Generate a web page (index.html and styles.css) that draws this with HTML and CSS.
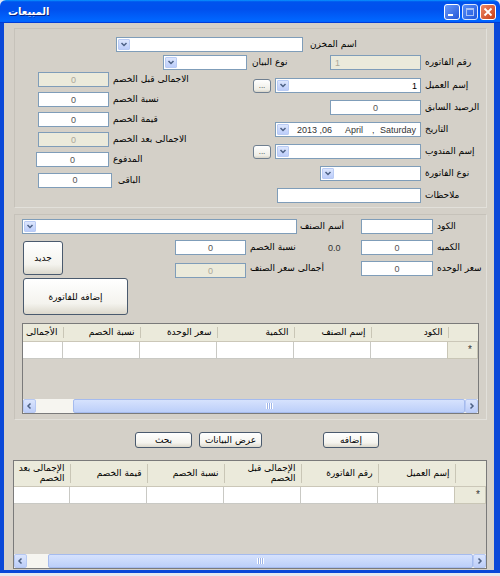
FILE: index.html
```html
<!DOCTYPE html>
<html>
<head>
<meta charset="utf-8">
<link rel="stylesheet" href="styles.css">
</head>
<body>
<div class="window">
  <div class="titlebar">
    <span class="title">المبيعات</span>
    <div class="tb-btns">
      <svg width="16" height="16" viewBox="0 0 16 16"><defs><linearGradient id="gb" x1="0" y1="0" x2="1" y2="1"><stop offset="0" stop-color="#6b9cfb"/><stop offset="1" stop-color="#2153d6"/></linearGradient></defs><rect x="0.5" y="0.5" width="15" height="15" rx="2.5" fill="url(#gb)" stroke="#fff"/><rect x="4" y="10" width="5" height="2" fill="#fff"/></svg>
      <svg width="16" height="16" viewBox="0 0 16 16"><rect x="0.5" y="0.5" width="15" height="15" rx="2.5" fill="url(#gb)" stroke="#fff" opacity="0.85"/><rect x="4.5" y="4.5" width="7" height="7" fill="none" stroke="#a9c1f5"/><rect x="4" y="4" width="8" height="2" fill="#a9c1f5"/></svg>
      <svg width="16" height="16" viewBox="0 0 16 16"><defs><linearGradient id="gr" x1="0" y1="0" x2="1" y2="1"><stop offset="0" stop-color="#ef8a68"/><stop offset="1" stop-color="#c53a12"/></linearGradient></defs><rect x="0.5" y="0.5" width="15" height="15" rx="2.5" fill="url(#gr)" stroke="#fff"/><path d="M4.5 4.5 L11.5 11.5 M11.5 4.5 L4.5 11.5" stroke="#fff" stroke-width="1.8"/></svg>
    </div>
  </div>
  <div class="frame">
    <div class="client">
      <!-- top panel -->
      <div class="panel top">
        <div class="row rowA">
          <div class="combo w187"><span class="dd"><svg width="12" height="11" viewBox="0 0 12 11"><path d="M3.5 4 L6 6.5 L8.5 4" fill="none" stroke="#4d6185" stroke-width="1.5"/></svg></span></div>
          <span class="lbl ml7">اسم المخزن</span>
        </div>
        <div class="row rowB">
          <div class="combo w84 ml148"><span class="dd"><svg width="12" height="11" viewBox="0 0 12 11"><path d="M3.5 4 L6 6.5 L8.5 4" fill="none" stroke="#4d6185" stroke-width="1.5"/></svg></span></div>
          <span class="lbl lblbox83">نوع البيان</span>
          <div class="tb dis w91 left">1</div>
          <span class="lbl ml4">رقم الفاتوره</span>
        </div>
        <div class="cols">
          <div class="lcol">
            <div class="row"><div class="tb dis w71">0</div><span class="lbl ml4">الاجمالى قبل الخصم</span></div>
            <div class="row"><div class="tb w71">0</div><span class="lbl ml4">نسبة الخصم</span></div>
            <div class="row"><div class="tb w71">0</div><span class="lbl ml4">قيمة الخصم</span></div>
            <div class="row"><div class="tb dis w71">0</div><span class="lbl ml4">الاجمالى بعد الخصم</span></div>
            <div class="row"><div class="tb w73 mlm2">0</div><span class="lbl ml4">المدفوع</span></div>
            <div class="row h16"><div class="tb w74 h16">0</div><span class="lbl ml6">الباقى</span></div>
          </div>
          <div class="rcol">
            <div class="row">
              <div class="rctl"><span class="dots">...</span><div class="combo w146"><span class="dd"><svg width="12" height="11" viewBox="0 0 12 11"><path d="M3.5 4 L6 6.5 L8.5 4" fill="none" stroke="#4d6185" stroke-width="1.5"/></svg></span><span class="cval">1</span></div></div>
              <span class="lbl ml4">إسم العميل</span>
            </div>
            <div class="row">
              <div class="rctl"><div class="tb w91">0</div></div>
              <span class="lbl ml4">الرصيد السابق</span>
            </div>
            <div class="row">
              <div class="rctl"><div class="combo w146 date"><span class="dd"><svg width="12" height="11" viewBox="0 0 12 11"><path d="M3.5 4 L6 6.5 L8.5 4" fill="none" stroke="#4d6185" stroke-width="1.5"/></svg></span><span class="d1">2013 ,06</span><span class="d2">April</span><span class="d3">,</span><span class="d4">Saturday</span></div></div>
              <span class="lbl ml4">التاريخ</span>
            </div>
            <div class="row">
              <div class="rctl"><span class="dots">...</span><div class="combo w146"><span class="dd"><svg width="12" height="11" viewBox="0 0 12 11"><path d="M3.5 4 L6 6.5 L8.5 4" fill="none" stroke="#4d6185" stroke-width="1.5"/></svg></span></div></div>
              <span class="lbl ml4">إسم المندوب</span>
            </div>
            <div class="row">
              <div class="rctl"><div class="combo w101"><span class="dd"><svg width="12" height="11" viewBox="0 0 12 11"><path d="M3.5 4 L6 6.5 L8.5 4" fill="none" stroke="#4d6185" stroke-width="1.5"/></svg></span></div></div>
              <span class="lbl ml4">نوع الفاتورة</span>
            </div>
            <div class="row">
              <div class="rctl"><div class="tb w144"></div></div>
              <span class="lbl ml4">ملاحظات</span>
            </div>
          </div>
        </div>
      </div>

      <!-- middle panel -->
      <div class="panel mid">
        <div class="row mrow1">
          <div class="combo w275"><span class="dd"><svg width="12" height="11" viewBox="0 0 12 11"><path d="M3.5 4 L6 6.5 L8.5 4" fill="none" stroke="#4d6185" stroke-width="1.5"/></svg></span></div>
          <span class="lbl box64">أسم الصنف</span>
          <div class="tb w72"></div>
          <span class="lbl ml4">الكود</span>
        </div>
        <div class="mbody">
          <div class="bcol">
            <div class="btn bnew">جديد</div>
            <div class="btn badd">إضافه للفاتورة</div>
          </div>
          <div class="fields">
            <div class="row">
              <div class="tb w71">0</div>
              <span class="lbl box79">نسبة الخصم</span>
              <span class="num box36">0.0</span>
              <div class="tb w72">0</div>
              <span class="lbl ml4">الكميه</span>
            </div>
            <div class="row r3">
              <div class="tb dis w71 down2">0</div>
              <span class="lbl box115">أجمالى سعر الصنف</span>
              <div class="tb w72">0</div>
              <span class="lbl ml4">سعر الوحده</span>
            </div>
          </div>
        </div>
        <div class="grid g1">
          <div class="gview">
            <table class="gt">
              <colgroup><col class="rh30"><col class="c77"><col class="c77"><col class="c77"><col class="c77"><col class="c77"><col class="c77"></colgroup>
              <tr class="hdr"><th class="rhc"></th><th>الكود</th><th>إسم الصنف</th><th>الكمية</th><th>سعر الوحدة</th><th>نسبة الخصم</th><th>الأجمالى</th></tr>
              <tr class="drow"><td class="rhc star">*</td><td></td><td></td><td></td><td></td><td></td><td></td></tr>
            </table>
          </div>
          <div class="hscroll">
            <span class="sba"><svg width="11" height="12" viewBox="0 0 11 12"><path d="M6.5 3.5 L4 6 L6.5 8.5" fill="none" stroke="#4d6185" stroke-width="1.5"/></svg></span>
            <span class="sbt w37"></span>
            <span class="sbth"><span class="grip"></span></span>
            <span class="sba"><svg width="11" height="12" viewBox="0 0 11 12"><path d="M4.5 3.5 L7 6 L4.5 8.5" fill="none" stroke="#4d6185" stroke-width="1.5"/></svg></span>
          </div>
        </div>
      </div>

      <!-- bottom -->
      <div class="brow">
        <div class="btn bsm w57">بحث</div>
        <div class="btn bsm w63 ml7">عرض البيانات</div>
        <div class="btn bsm w56 ml61">إضافه</div>
      </div>
      <div class="grid g2">
        <div class="gview">
          <table class="gt">
            <colgroup><col class="rh31"><col class="c77"><col class="c77"><col class="c77"><col class="c77"><col class="c77"><col class="c77"></colgroup>
            <tr class="hdr h2"><th class="rhc"></th><th>إسم العميل</th><th>رقم الفاتورة</th><th>الإجمالى قبل<br>الخصم</th><th>نسبة الخصم</th><th>قيمة الخصم</th><th>الإجمالى بعد<br>الخصم</th></tr>
            <tr class="drow"><td class="rhc star">*</td><td></td><td></td><td></td><td></td><td></td><td></td></tr>
          </table>
        </div>
        <div class="hscroll">
          <span class="sba"><svg width="11" height="12" viewBox="0 0 11 12"><path d="M6.5 3.5 L4 6 L6.5 8.5" fill="none" stroke="#4d6185" stroke-width="1.5"/></svg></span>
          <span class="sbt w21"></span>
          <span class="sbth"><span class="grip"></span></span>
          <span class="sba"><svg width="11" height="12" viewBox="0 0 11 12"><path d="M4.5 3.5 L7 6 L4.5 8.5" fill="none" stroke="#4d6185" stroke-width="1.5"/></svg></span>
        </div>
      </div>
    </div>
  </div>
  <div class="desk"></div>
</div>
</body>
</html>
```
FILE: styles.css
```css
* { box-sizing: border-box; }
html, body { margin: 0; padding: 0; }
body {
  width: 500px; height: 576px; overflow: hidden;
  background: #dfe6f3;
  font-family: "Liberation Sans", "DejaVu Sans", sans-serif;
  font-size: 9px; color: #000;
}
.window { width: 500px; height: 576px; display: flex; flex-direction: column; }
.titlebar {
  height: 23px; flex: none;
  display: flex; align-items: center; justify-content: space-between;
  padding: 0 4px 0 8px;
  border-radius: 6px 6px 0 0;
  background: linear-gradient(180deg, #0997ff, #0053ee 8%, #0050ee 40%, #06f 88%, #06f 93%, #005bff 95%, #003dd7 96%, #003dd7);
}
.title {
  color: #fff; font-weight: bold; font-size: 10px;
  font-family: "DejaVu Sans", sans-serif;
  text-shadow: 1px 1px #0a1f7d;
}
.tb-btns { display: flex; gap: 2px; margin-top: 1px; }
.tb-btns svg { display: block; }
.frame {
  height: 550px; flex: none;
  background: #0a48d8;
  padding: 0 6px 3px 4px;
}
.desk { flex: 1; background: #e4e9f1; }
.client {
  width: 490px; height: 547px;
  background: #d4d0c8;
  display: flex; flex-direction: column; align-items: flex-start;
}

.panel {
  margin-left: 10px; width: 473px;
  border: 1px solid; border-color: #c6c2ba #e2e0da #e2e0da #c6c2ba;
  display: flex; flex-direction: column; align-items: flex-start;
}
.panel.top { margin-top: 5px; height: 180px; }
.panel.mid { margin-top: 6px; height: 206px; }

.row { display: flex; align-items: center; height: 15px; }
.h16 { height: 16px; }
.rowA { margin: 8px 0 0 101px; }
.rowB { margin-top: 3px; }

.lbl { font-family: "DejaVu Sans", sans-serif; font-size: 9px; white-space: nowrap; line-height: 15px; }
.num { font-size: 9px; color: #333; }

.tb {
  height: 15px; border: 1px solid #7f9db9; background: #fff;
  display: flex; align-items: center; justify-content: center;
  color: #555; font-size: 9px;
}
.tb.dis { background: #ebeadb; color: #aca899; }
.tb.left { justify-content: flex-start; padding-left: 4px; }
.combo {
  height: 15px; border: 1px solid #7f9db9; background: #fff;
  display: flex; align-items: center; padding: 0 1px;
}
.dd {
  width: 12px; height: 11px; flex: none;
  border: 1px solid #b9cbf4; border-radius: 1px;
  background: linear-gradient(180deg, #dce6fd, #bccdfa);
  display: flex; align-items: center; justify-content: center;
}
.dd svg { display: block; margin: -1px; }
.cval { margin-left: auto; margin-right: 2px; color: #000; }
.date span { color: #333; white-space: nowrap; }
.date .d1 { margin-left: 8px; width: 48px; }
.date .d2 { width: 27px; }
.date .d3 { width: 8px; }

.dots {
  width: 18px; height: 14px; flex: none;
  border: 1px solid #6f7f90; border-radius: 3px;
  background: linear-gradient(180deg, #fff, #eeede6 80%, #d8d4c8);
  display: flex; align-items: center; justify-content: center;
  font-size: 8px; color: #333; line-height: 8px;
}

.w187 { width: 187px; } .w84 { width: 84px; } .w91 { width: 91px; }
.w71 { width: 71px; } .w72 { width: 72px; } .w73 { width: 73px; } .w74 { width: 74px; }
.w146 { width: 146px; } .w101 { width: 101px; } .w144 { width: 144px; } .w275 { width: 275px; }
.ml4 { margin-left: 4px; } .ml6 { margin-left: 6px; } .ml7 { margin-left: 7px; }
.ml148 { margin-left: 148px; } .mlm2 { margin-left: -2px; } .ml61 { margin-left: 61px; }
.lblbox83 { width: 83px; padding-left: 5px; }
.box64 { width: 64px; padding-left: 3px; }
.box79 { width: 79px; padding-left: 4px; }
.box36 { width: 36px; padding-left: 3px; }
.box115 { width: 115px; padding-left: 4px; }

.cols { display: flex; align-items: flex-start; margin-left: 23px; }
.lcol { width: 215px; padding-top: 2px; display: flex; flex-direction: column; gap: 5px; }
.rcol { padding-top: 8px; display: flex; flex-direction: column; gap: 7px; }
.rctl { width: 168px; display: flex; justify-content: flex-end; align-items: center; gap: 4px; }

.mrow1 { margin: 4px 0 0 7px; }
.mbody { display: flex; margin: 6px 0 0 8px; align-items: flex-start; }
.bcol { width: 105px; display: flex; flex-direction: column; align-items: flex-start; }
.btn {
  border: 1px solid #4a5a6e; border-radius: 3px;
  background: linear-gradient(180deg, #fff, #f4f3ee 70%, #dcd8cc);
  display: flex; align-items: center; justify-content: center;
  font-family: "DejaVu Sans", sans-serif; font-size: 9px; white-space: nowrap;
}
.bnew { width: 40px; height: 34px; margin-top: 1px; }
.badd { width: 105px; height: 37px; margin-top: 3px; }
.fields { margin-left: 47px; display: flex; flex-direction: column; }
.r3 { margin-top: 6px; height: 17px; align-items: flex-start; }
.down2 { margin-top: 2px; }

.grid {
  border: 1px solid #7a7a7a; background: #d6d2ca;
  display: flex; flex-direction: column; overflow: hidden;
}
.g1 { width: 457px; height: 91px; margin: 8px 0 0 7px; }
.g2 { width: 474px; height: 109px; margin: 12px 0 0 9px; }
.gview { flex: 1; overflow: hidden; direction: rtl; }
.gt { table-layout: fixed; border-collapse: collapse; width: 492px; }
.g2 .gt { width: 493px; }
.rh30 { width: 30px; } .rh31 { width: 31px; } .c77 { width: 77px; }
.gt th {
  height: 17px; padding: 0 5px 0 2px; text-align: right; font-weight: normal;
  font-family: "DejaVu Sans", sans-serif; font-size: 9px; white-space: nowrap; overflow: hidden;
  background: linear-gradient(#c9c6b6, #c9c6b6) no-repeat left 3px / 1px calc(100% - 6px), #ebeadb;
  border-bottom: 1px solid #cbc7b8;
}
.gt .h2 th { height: 25px; line-height: 10px; }
.gt td {
  height: 17px; background: #fff; border: 1px solid #c9c9c4; border-top: none; padding: 0;
}
.gt td.rhc { background: #ebeadb; border-color: #c9c6b6; }
.star { text-align: right; padding-right: 5px !important; font-size: 10px; color: #333; }

.hscroll { height: 14px; flex: none; display: flex; background: #f4f3ee; }
.sba {
  width: 13px; flex: none; border: 1px solid #b6c8f3; border-radius: 2px;
  background: linear-gradient(180deg, #dbe5fd, #bccdf8);
  display: flex; align-items: center; justify-content: center;
}
.sba svg { display: block; }
.sbt { flex: none; background: #f6f5f0; }
.w37 { width: 37px; } .w21 { width: 21px; }
.sbth {
  flex: 1; border: 1px solid #a5bbee; border-radius: 2px;
  background: linear-gradient(180deg, #d6e2fd, #bccff9);
  display: flex; align-items: center; justify-content: center;
}
.grip { width: 7px; height: 6px; background: repeating-linear-gradient(90deg, #fff 0 1px, #9db4e8 1px 2px); }

.brow { display: flex; margin: 12px 0 0 131px; }
.bsm { height: 16px; }
.w57 { width: 57px; } .w63 { width: 63px; } .w56 { width: 56px; }
```
